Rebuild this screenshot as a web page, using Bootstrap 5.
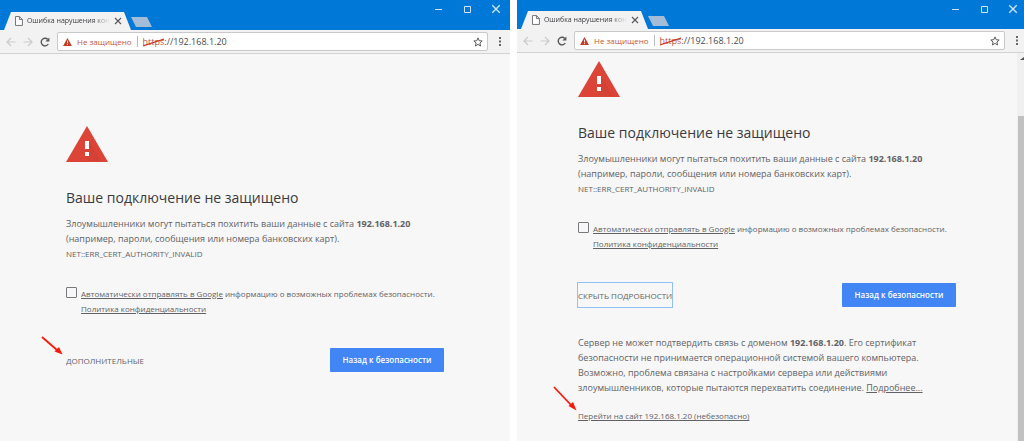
<!DOCTYPE html>
<html lang="ru">
<head>
<meta charset="utf-8">
<meta name="viewport" content="width=device-width, initial-scale=1">
<title>Ошибка нарушения конфиденциальности</title>
<link href="https://cdn.jsdelivr.net/npm/bootstrap@5.3.0/dist/css/bootstrap.min.css" rel="stylesheet">
<style>
body { font-family: "Open Sans", "Noto Sans", sans-serif; font-size: 9px; line-height: 15px; color: #626266; background: #fff; }
.windows { gap: 7px; }
.browser { background: #f7f7f7; min-width: 0; }
.first { flex: 510 1 0; }
.second { flex: 507 1 0; }
.titlebar { height: 30px; background: #0078d8; padding-left: 4px; }
.second .titlebar { height: 29px; }
.tab-page { position: relative; width: 127px; height: 18px; padding: 0 9px 0 11px; gap: 4px; }
.tab-page > svg, .tab-page > span, .tab-page > button { position: relative; }
.tab-page::before { content: ""; position: absolute; inset: 0; background: #f2f2f2; clip-path: polygon(7px 0, 120px 0, 100% 100%, 0 100%); }
.tab-title { font-size: 7px; line-height: 18px; color: #3c3c40; width: 84px; -webkit-mask-image: linear-gradient(90deg, #000 80%, transparent); mask-image: linear-gradient(90deg, #000 80%, transparent); }
.plain { border: 0; background: none; padding: 0; color: inherit; line-height: inherit; display: block; }
.browser svg { display: block; }
.tab-page .plain { color: #55555a; }
.browser .newtab { width: 21px; height: 10px; margin-bottom: 3px; background: #a3bcd8; clip-path: polygon(0 0, 16px 0, 100% 100%, 5px 100%); }
.winbtns { gap: 19px; padding: 4px 9px 0 0; color: #cfe5f8; }
.second .winbtns { padding-right: 6px; }
.toolbar { height: 24px; background: #f2f2f2; border-bottom: 1px solid #d2d2d2; padding: 0 5px 0 6px; gap: 7px; }
.second .toolbar { padding-right: 2px; }
.omnibox { height: 19px; border: 1px solid #c9c9c9; border-radius: 2px; background: #fff; padding: 0 4px 0 5px; font-size: 8px; line-height: 16px; gap: 5px; }
.insecure { color: #c5563a; }
.divider { width: 1px; height: 11px; background: #bbb; }
.address { position: relative; font-size: 9px; color: #4a4a4e; }
.address .scheme { color: #c5563a; }
.address .strike { position: absolute; left: 0; top: 4px; }
.first .notice { padding-top: 72px; }
.second .notice { padding-top: 8px; }
.column { width: 378px; max-width: 100%; }
.browser h1 { font-size: 14px; line-height: 24px; font-weight: 400; color: #3a3a40; margin: 24px 0 6px; }
.code { font-size: 8px; }
.report { font-size: 8px; margin-top: 25px; gap: 4px; }
.report input { appearance: none; width: 11px; height: 11px; border: 1px solid #77777c; border-radius: 1px; background: #f7f7f7; margin: 1px 0 0; flex: none; }
.browser a { color: inherit; }
.actions { margin-top: 32px; }
.toggle { font-size: 8px; height: 24px; }
.toggle.focused { outline: 1px solid #8ec1f5; }
.safe { width: 114px; height: 24px; padding: 0; font-size: 8px; font-weight: 600; line-height: 22px; border-radius: 1px; color: #fff; background: #4285f4; }
.safe:hover { background: #3b78e7; color: #fff; }
.details { margin-top: 28px; }
.proceed { font-size: 8px; margin-top: 13px; }
.arrow { position: absolute; left: -25px; }
.first .arrow { top: -12px; }
.second .arrow { top: -22px; }
.scroller { width: 7px; background: #f0f0f0; }
.scroll-up { height: 9px; margin-bottom: 54px; }
.thumb { background: #c1c1c1; margin-left: 1px; }
</style>
</head>
<body>
<svg width="0" height="0" class="position-absolute" aria-hidden="true">
  <symbol id="page" viewBox="0 0 8 10"><path d="M.5.5h4l3 3v6h-7zM4.500.5v3h3" fill="#fff" stroke="#66666a" stroke-width=".9"/></symbol>
  <symbol id="cross" viewBox="0 0 8 8"><path d="M1 1l6 6M7 1L1 7" fill="none" stroke="currentColor" stroke-width="1.1"/></symbol>
  <symbol id="min" viewBox="0 0 10 10"><path d="M2 5.500h7" stroke="#cfe5f8"/></symbol>
  <symbol id="max" viewBox="0 0 10 10"><path d="M2.500 2.500h6v6h-6z" fill="none" stroke="#cfe5f8"/></symbol>
  <symbol id="back" viewBox="0 0 10 10"><path d="M9.500 5H1M5 1L1 5l4 4" fill="none" stroke="#cbcbcb" stroke-width="1.200"/></symbol>
  <symbol id="forward" viewBox="0 0 10 10"><path d="M.5 5H9M5 1l4 4-4 4" fill="none" stroke="#cbcbcb" stroke-width="1.200"/></symbol>
  <symbol id="reload" viewBox="0 0 10 10"><path d="M8.300 7A3.800 3.800 0 1 1 7.700 2.300" fill="none" stroke="#55555a" stroke-width="1.400"/><path d="M9.400.4v4H5.400z" fill="#55555a"/></symbol>
  <symbol id="alert" viewBox="0 0 10 9"><path d="M5 0l5 9H0z" fill="#c53b22"/><path d="M5 3v3M5 6.800v1" stroke="#fff"/></symbol>
  <symbol id="star" viewBox="0 0 10 10"><path d="M5 .9l1.200 2.800 3 .3-2.300 2 .7 3L5 7.400 2.400 9l.7-3L.8 4l3-.3z" fill="none" stroke="#5c5c60"/></symbol>
  <symbol id="dots" viewBox="0 0 2 9"><path d="M0 0h2v2H0zM0 3.500h2v2H0zM0 7h2v2H0z" fill="#66666a"/></symbol>
  <symbol id="warning" viewBox="0 0 42 36"><path d="M21 0l21 36H0z" fill="#db4437"/><path d="M23 15l12 20H23l-4-5z" fill="#cf3f33" opacity=".6"/><path d="M19 15h4v8h-4zM19 26h4v4h-4z" fill="#fff"/></symbol>
  <symbol id="pointer" viewBox="0 0 22 19"><path d="M1 1l15 13" stroke="#f8190b" stroke-width="1.800"/><path d="M21.500 18.500l-8-3 4.500-4.500z" fill="#f8190b"/></symbol>
  <symbol id="pointer-steep" viewBox="0 0 24 25"><path d="M1 1l17 18" stroke="#f8190b" stroke-width="1.800"/><path d="M23.500 24.500l-8-4.500 4.500-4z" fill="#f8190b"/></symbol>
</svg>

<div class="windows d-flex min-vh-100">
  <section class="browser first d-flex flex-column">
    <header class="titlebar d-flex align-items-end">
      <div class="tab-page d-flex align-items-center">
        <svg width="8" height="10"><use href="#page"/></svg>
        <span class="tab-title text-nowrap overflow-hidden">Ошибка нарушения кон</span>
        <button class="plain" aria-label="Закрыть вкладку"><svg width="8" height="8"><use href="#cross"/></svg></button>
      </div>
      <button class="plain newtab" aria-label="Новая вкладка"></button>
      <div class="winbtns d-flex ms-auto align-self-start">
        <button class="plain" aria-label="Свернуть"><svg width="10" height="10"><use href="#min"/></svg></button>
        <button class="plain" aria-label="Развернуть"><svg width="10" height="10"><use href="#max"/></svg></button>
        <button class="plain" aria-label="Закрыть"><svg width="10" height="10"><use href="#cross"/></svg></button>
      </div>
    </header>
    <nav class="toolbar d-flex align-items-center">
      <button class="plain" aria-label="Назад"><svg width="10" height="10"><use href="#back"/></svg></button>
      <button class="plain" aria-label="Вперёд"><svg width="10" height="10"><use href="#forward"/></svg></button>
      <button class="plain" aria-label="Обновить"><svg width="10" height="10"><use href="#reload"/></svg></button>
      <div class="omnibox d-flex align-items-center flex-fill">
        <svg width="9" height="8"><use href="#alert"/></svg>
        <span class="insecure">Не защищено</span>
        <span class="divider"></span>
        <span class="address"><span class="scheme">https</span>://192.168.1.20<svg class="strike" width="21" height="9"><path d="M0 8L21 1" stroke="#c53b22" stroke-width="1.300"/></svg></span>
        <button class="plain ms-auto" aria-label="Добавить в закладки"><svg width="10" height="10"><use href="#star"/></svg></button>
      </div>
      <button class="plain px-1" aria-label="Меню"><svg width="2" height="9"><use href="#dots"/></svg></button>
    </nav>
    <main class="notice d-flex justify-content-center">
      <div class="column">
        <svg width="42" height="36"><use href="#warning"/></svg>
        <h1>Ваше подключение не защищено</h1>
        <p class="mb-0">Злоумышленники могут пытаться похитить ваши данные с сайта <strong>192.168.1.20</strong> (например, пароли, сообщения или номера банковских карт).</p>
        <p class="code mb-0">NET::ERR_CERT_AUTHORITY_INVALID</p>
        <div class="report d-flex align-items-start">
          <input type="checkbox" id="send1">
          <label for="send1"><a href="#">Автоматически отправлять в Google</a> информацию о возможных проблемах безопасности. <a href="#">Политика конфиденциальности</a></label>
        </div>
        <div class="actions d-flex justify-content-between position-relative">
          <svg class="arrow" width="22" height="19"><use href="#pointer"/></svg>
          <button class="plain toggle">ДОПОЛНИТЕЛЬНЫЕ</button>
          <button class="btn safe">Назад к безопасности</button>
        </div>
      </div>
    </main>
  </section>

  <section class="browser second d-flex flex-column">
    <header class="titlebar d-flex align-items-end">
      <div class="tab-page d-flex align-items-center">
        <svg width="8" height="10"><use href="#page"/></svg>
        <span class="tab-title text-nowrap overflow-hidden">Ошибка нарушения кон</span>
        <button class="plain" aria-label="Закрыть вкладку"><svg width="8" height="8"><use href="#cross"/></svg></button>
      </div>
      <button class="plain newtab" aria-label="Новая вкладка"></button>
      <div class="winbtns d-flex ms-auto align-self-start">
        <button class="plain" aria-label="Свернуть"><svg width="10" height="10"><use href="#min"/></svg></button>
        <button class="plain" aria-label="Развернуть"><svg width="10" height="10"><use href="#max"/></svg></button>
        <button class="plain" aria-label="Закрыть"><svg width="10" height="10"><use href="#cross"/></svg></button>
      </div>
    </header>
    <nav class="toolbar d-flex align-items-center">
      <button class="plain" aria-label="Назад"><svg width="10" height="10"><use href="#back"/></svg></button>
      <button class="plain" aria-label="Вперёд"><svg width="10" height="10"><use href="#forward"/></svg></button>
      <button class="plain" aria-label="Обновить"><svg width="10" height="10"><use href="#reload"/></svg></button>
      <div class="omnibox d-flex align-items-center flex-fill">
        <svg width="9" height="8"><use href="#alert"/></svg>
        <span class="insecure">Не защищено</span>
        <span class="divider"></span>
        <span class="address"><span class="scheme">https</span>://192.168.1.20<svg class="strike" width="21" height="9"><path d="M0 8L21 1" stroke="#c53b22" stroke-width="1.300"/></svg></span>
        <button class="plain ms-auto" aria-label="Добавить в закладки"><svg width="10" height="10"><use href="#star"/></svg></button>
      </div>
      <button class="plain px-1" aria-label="Меню"><svg width="2" height="9"><use href="#dots"/></svg></button>
    </nav>
    <div class="d-flex flex-fill">
      <main class="notice d-flex justify-content-center flex-fill">
        <div class="column">
          <svg width="42" height="36"><use href="#warning"/></svg>
          <h1>Ваше подключение не защищено</h1>
          <p class="mb-0">Злоумышленники могут пытаться похитить ваши данные с сайта <strong>192.168.1.20</strong> (например, пароли, сообщения или номера банковских карт).</p>
          <p class="code mb-0">NET::ERR_CERT_AUTHORITY_INVALID</p>
          <div class="report d-flex align-items-start">
            <input type="checkbox" id="send2">
            <label for="send2"><a href="#">Автоматически отправлять в Google</a> информацию о возможных проблемах безопасности. <a href="#">Политика конфиденциальности</a></label>
          </div>
          <div class="actions d-flex justify-content-between">
            <button class="plain toggle focused">СКРЫТЬ ПОДРОБНОСТИ</button>
            <button class="btn safe">Назад к безопасности</button>
          </div>
          <p class="details mb-0">Сервер не может подтвердить связь с доменом <strong>192.168.1.20</strong>. Его сертификат безопасности не принимается операционной системой вашего компьютера. Возможно, проблема связана с настройками сервера или действиями злоумышленников, которые пытаются перехватить соединение. <a href="#">Подробнее...</a></p>
          <div class="proceed position-relative">
            <svg class="arrow" width="24" height="25"><use href="#pointer-steep"/></svg>
            <a href="#">Перейти на сайт 192.168.1.20 (небезопасно)</a>
          </div>
        </div>
      </main>
      <div class="scroller d-flex flex-column" aria-hidden="true">
        <svg class="scroll-up" width="7" height="9"><path d="M3 7h4V4z" fill="#505050"/></svg>
        <div class="thumb flex-fill"></div>
      </div>
    </div>
  </section>
</div>
<script src="https://cdn.jsdelivr.net/npm/bootstrap@5.3.0/dist/js/bootstrap.bundle.min.js"></script>
</body>
</html>
